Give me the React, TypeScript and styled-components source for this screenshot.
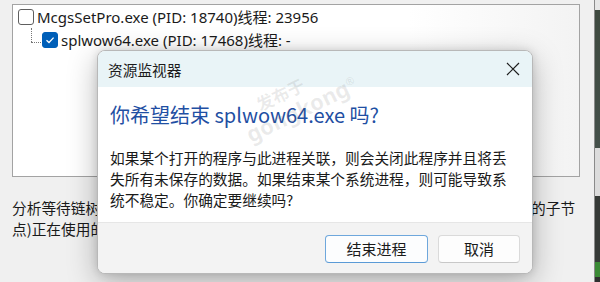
import React from "react";
import styled, { createGlobalStyle } from "styled-components";

const GlobalStyle = createGlobalStyle`
  html, body { margin: 0; padding: 0; background: #f0f0f0; }
  body {
    width: 600px;
    height: 282px;
    overflow: hidden;
    font-family: "Noto Sans", "Noto Sans CJK SC", sans-serif;
  }
`;

const CJK = `"Noto Sans CJK SC", "Noto Sans", sans-serif`;

const Screen = styled.div`
  position: relative;
  display: flex;
  width: 600px;
  height: 282px;
  overflow: hidden;
  background: #f0f0f0;
`;

const MainPane = styled.div`
  flex: 1;
  display: flex;
  flex-direction: column;
  padding: 4px 0 0 12px;
`;

const ListBox = styled.div`
  width: 568px;
  height: 173px;
  box-sizing: border-box;
  border: 1px solid #a3a3a3;
  background: linear-gradient(90deg, #ffffff 0%, #ffffff 70%, #f3f3f3 100%);
  padding: 0 0 0 5px;
  display: flex;
  flex-direction: column;
`;

const TreeRow = styled.div`
  display: flex;
  align-items: center;
  height: 23px;
  gap: 3px;
  font-size: 15px;
  color: #1a1a1a;
  white-space: nowrap;
`;

const Connector = styled.span`
  position: relative;
  align-self: stretch;
  width: 21px;
  &::before {
    content: "";
    position: absolute;
    left: 13px;
    top: 0;
    height: 14px;
    border-left: 1px dotted #777;
  }
  &::after {
    content: "";
    position: absolute;
    left: 13px;
    top: 14px;
    width: 10px;
    border-top: 1px dotted #777;
  }
`;

const CheckBox = styled.span<{ $checked?: boolean }>`
  display: inline-flex;
  align-items: center;
  justify-content: center;
  width: 16px;
  height: 16px;
  box-sizing: border-box;
  border-radius: 3px;
  border: 1px solid ${(p) => (p.$checked ? "#005fb8" : "#5f5f5f")};
  background: ${(p) => (p.$checked ? "#005fb8" : "#ffffff")};
  flex-shrink: 0;
`;

const Description = styled.p`
  margin: 20px 0 0 0;
  font-family: ${CJK};
  font-size: 14.7px;
  line-height: 21px;
  color: #1a1a1a;
  white-space: nowrap;
`;

const RightStrip = styled.div`
  width: 5px;
  border-left: 1px solid #8a8a8a;
  background: linear-gradient(
    180deg,
    #e6e6e6 0px,
    #e6e6e6 10px,
    #3f4a40 10px,
    #44504a 148px,
    #dcdcdc 148px,
    #dcdcdc 196px,
    #363a37 196px,
    #363a37 262px,
    #3b8a35 262px,
    #3b8a35 277px,
    #2f2f2f 277px
  );
`;

const Dialog = styled.div`
  position: absolute;
  left: 97px;
  top: 50px;
  width: 436px;
  height: 224px;
  box-sizing: border-box;
  display: flex;
  flex-direction: column;
  border: 1px solid #b8b8b8;
  border-radius: 8px;
  overflow: hidden;
  background: #ffffff;
  box-shadow: 0 8px 30px rgba(0, 0, 0, 0.28), 0 0 8px rgba(0, 0, 0, 0.12);
  font-family: ${CJK};
`;

const TitleBar = styled.div`
  height: 36px;
  flex-shrink: 0;
  display: flex;
  align-items: center;
  justify-content: space-between;
  padding: 0 12px 0 10px;
  background: #e9f4f7;
  font-size: 14.7px;
  color: #1b1b1b;
`;

const CloseIcon = styled.svg`
  width: 14px;
  height: 14px;
`;

const Body = styled.div`
  flex: 1;
  padding: 14px 12px 0 12px;
`;

const Heading = styled.h1`
  margin: 0;
  font-size: 20px;
  font-weight: 400;
  line-height: 28px;
  color: #1f4fa3;
  font-family: ${CJK};
`;

const Message = styled.p`
  margin: 18px 0 0 0;
  font-size: 14.7px;
  line-height: 21px;
  color: #1a1a1a;
`;

const Footer = styled.div`
  height: 51px;
  flex-shrink: 0;
  box-sizing: border-box;
  display: flex;
  align-items: center;
  justify-content: flex-end;
  gap: 10px;
  padding: 1px 12px 0 0;
  background: #f3f3f3;
  border-top: 1px solid #e6e6e6;
`;

const Button = styled.button<{ $primary?: boolean; $width: number }>`
  width: ${(p) => p.$width}px;
  height: 28px;
  box-sizing: border-box;
  border-radius: 4px;
  border: 1px solid ${(p) => (p.$primary ? "#6ea7dc" : "#dadada")};
  border-bottom-color: ${(p) => (p.$primary ? "#5a9ad6" : "#c8c8c8")};
  background: ${(p) => (p.$primary ? "#fcfdfe" : "#fdfdfd")};
  font-family: ${CJK};
  font-size: 15px;
  color: #1a1a1a;
  padding: 0;
`;

const Watermark = styled.div`
  position: absolute;
  left: 234px;
  top: 108px;
  transform: rotate(-26deg);
  transform-origin: left top;
  display: flex;
  flex-direction: column;
  align-items: flex-start;
  color: rgba(90, 90, 90, 0.12);
  font-family: "Noto Sans", "Noto Sans CJK SC", sans-serif;
  font-weight: 700;
  pointer-events: none;
  line-height: 1;
`;

const WatermarkTop = styled.span`
  font-size: 17px;
  margin-left: 22px;
`;

const WatermarkBottom = styled.span`
  font-size: 22px;
  margin-top: 2px;
  & sup {
    font-size: 11px;
  }
`;

export default function App() {
  return (
    <>
      <GlobalStyle />
      <Screen>
        <MainPane>
          <ListBox>
            <TreeRow>
              <CheckBox />
              <span>McgsSetPro.exe (PID: 18740)线程: 23956</span>
            </TreeRow>
            <TreeRow>
              <Connector />
              <CheckBox $checked>
                <svg width="10" height="10" viewBox="0 0 10 10">
                  <path d="M1.5 5.2 L4 7.5 L8.6 2.6" fill="none" stroke="#fff" strokeWidth="1.3" />
                </svg>
              </CheckBox>
              <span>splwow64.exe (PID: 17468)线程: -</span>
            </TreeRow>
          </ListBox>
          <Description>
            分析等待链树显示正在等待使用另一个进程所使用的资源的进程或线程(或该进程的子节
            <br />
            点)正在使用的资源。
          </Description>
        </MainPane>
        <RightStrip />

        <Dialog>
          <TitleBar>
            <span>资源监视器</span>
            <CloseIcon viewBox="0 0 14 14">
              <path d="M1 1 L13 13 M13 1 L1 13" stroke="#1f1f1f" strokeWidth="1.2" fill="none" />
            </CloseIcon>
          </TitleBar>
          <Body>
            <Heading>你希望结束 splwow64.exe 吗?</Heading>
            <Message>
              如果某个打开的程序与此进程关联，则会关闭此程序并且将丢
              <br />
              失所有未保存的数据。如果结束某个系统进程，则可能导致系
              <br />
              统不稳定。你确定要继续吗?
            </Message>
          </Body>
          <Footer>
            <Button $primary $width={103}>结束进程</Button>
            <Button $width={82}>取消</Button>
          </Footer>
        </Dialog>

        <Watermark>
          <WatermarkTop>发布于</WatermarkTop>
          <WatermarkBottom>
            gongkong<sup>®</sup>
          </WatermarkBottom>
        </Watermark>
      </Screen>
    </>
  );
}
